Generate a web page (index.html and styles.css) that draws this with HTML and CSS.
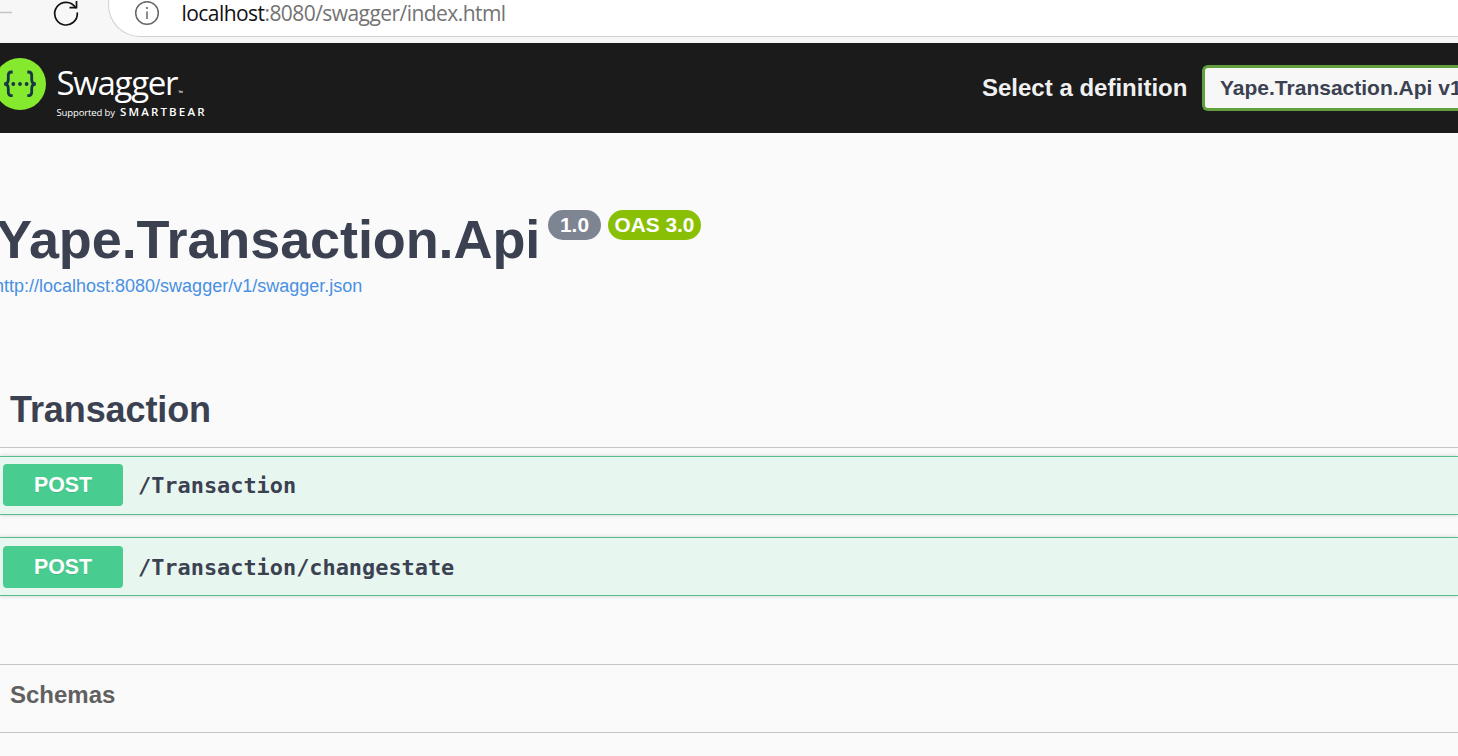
FILE: index.html
```html
<!DOCTYPE html>
<html lang="en">
<head>
<meta charset="utf-8">
<title>Swagger UI</title>
<link rel="stylesheet" href="styles.css">
</head>
<body>
<div class="browser-bar">
  <svg class="browser-icons" width="108" height="43" viewBox="0 0 108 43" fill="none">
    <path d="M0 12.5H12" stroke="#c4c4c4" stroke-width="1.5"/>
    <path d="M75.500 7.500A11.300 11.300 0 1 0 77.300 13" stroke="#111" stroke-width="1.700" stroke-linecap="round"/>
    <path d="M76.500 1V7.700H69.500" stroke="#111" stroke-width="1.700"/>
  </svg>
  <div class="address">
    <svg class="info-icon" width="26" height="26" viewBox="0 0 26 26" fill="none">
      <circle cx="13" cy="13" r="11.3" stroke="#666" stroke-width="1.5"/>
      <path d="M13 11.5V19" stroke="#666" stroke-width="1.5"/>
      <circle cx="13" cy="8" r="1.1" fill="#666"/>
    </svg>
    <span class="url"><span class="host">localhost</span>:8080/swagger/index.html</span>
  </div>
</div>
<header class="topbar">
  <svg class="logo" width="210" height="90" viewBox="0 0 210 90">
    <circle cx="20" cy="41" r="26" fill="#85ea2d"/>
    <g fill="none" stroke="#173647" stroke-width="2.8">
      <path d="M12.7 29H11.5Q8.3 29 8.3 32.5V36.5Q8.3 40.8 4.2 41Q8.3 41.2 8.3 45.500V49Q8.300 52.700 11.500 52.700H12.700"/>
      <path d="M27.300 29H28.500Q31.700 29 31.700 32.500V36.500Q31.700 40.800 35.800 41Q31.700 41.200 31.700 45.500V49Q31.700 52.700 28.500 52.700H27.300"/>
    </g>
    <g fill="#173647"><circle cx="13.300" cy="41" r="1.900"/><circle cx="20" cy="41" r="1.900"/><circle cx="26.600" cy="41" r="1.900"/></g>
    <text class="brand" x="56.500" y="51.800" textLength="122">Swagger</text>
    <text class="mark" x="178.500" y="52">™</text>
    <text class="support" x="56.500" y="72.500" textLength="58.500">Supported by</text>
    <text class="smartbear" x="120" y="72.500" textLength="84.500">SMARTBEAR</text>
  </svg>
  <div class="definition">
    <span class="definition-label">Select a definition</span>
    <div class="select">Yape.Transaction.Api v1</div>
  </div>
</header>
<main>
  <section class="info">
    <h1 class="title"><span class="title-name">Yape.Transaction.Api</span><span class="badge version">1.0</span><span class="badge oas">OAS 3.0</span></h1>
    <a class="spec-link">http://localhost:8080/swagger/v1/swagger.json</a>
  </section>
  <h2 class="tag">Transaction</h2>
  <div class="operations">
    <div class="operation"><span class="method">POST</span><span class="path">/Transaction</span></div>
    <div class="operation"><span class="method">POST</span><span class="path">/Transaction/changestate</span></div>
  </div>
  <section class="schemas">Schemas</section>
</main>
</body>
</html>
```

FILE: styles.css
```css
* { box-sizing: border-box; }
body {
  margin: 0;
  height: 756px;
  overflow: hidden;
  background: #fafafa;
  color: #3b4151;
  font-family: "Liberation Sans", Arial, sans-serif;
  white-space: nowrap;
}
.browser-bar { display: flex; height: 43px; background: #f7f7f7; }
.browser-icons { flex: none; }
.address {
  flex: 1;
  display: flex;
  height: 64px;
  margin-top: -27px;
  padding: 27px 0 0 25px;
  background: #fff;
  border: 1.5px solid #d0d0d0;
  border-right: 0;
  border-radius: 32px 0 0 32px;
}
.info-icon { flex: none; margin-top: -1px; }
.url {
  margin: -1px 0 0 21.500px;
  font: 21px/27px "Open Sans", "Noto Sans", sans-serif;
  letter-spacing: -.56px;
  color: #737373;
}
.host { color: #111; }
.topbar { display: flex; justify-content: space-between; height: 90px; background: #1b1b1b; }
.logo { flex: none; }
.logo text { fill: #fff; font-family: "Open Sans", sans-serif; }
.logo .brand { font-size: 33px; }
.logo .mark { font-size: 6px; }
.logo .support { font-size: 9.5px; }
.logo .smartbear { font-size: 11.5px; font-weight: 600; }
.definition { display: flex; align-items: center; width: 476px; font-weight: 700; }
.definition-label { width: 221px; color: #f0f0f0; font-size: 24px; }
.select {
  flex: 1;
  height: 46px;
  margin-left: -1px;
  padding-left: 15px;
  overflow: hidden;
  border: 3px solid #62a03f;
  border-right: 0;
  border-radius: 6px 0 0 6px;
  background: #f7f7f7;
  font-size: 21px;
  line-height: 40px;
}
.info { height: 235px; padding-top: 75px; }
.title { display: flex; margin: 0 0 0 -4px; height: 64px; font-size: 54px; line-height: 63px; }
.title-name { width: 552px; letter-spacing: -.1px; }
.badge { height: 30px; margin-top: 2px; border-radius: 15px; color: #fff; font-size: 20.8px; line-height: 30px; text-align: center; }
.version { width: 53px; background: #7d8492; }
.oas { width: 93px; margin-left: 7px; background: #89bf04; }
.spec-link { display: block; margin-left: -6px; color: #4990e2; font-size: 18px; line-height: 28px; }
.tag { height: 80px; margin: 0; padding: 21px 0 0 10px; border-bottom: 1px solid #c4c5c7; font-size: 36px; line-height: 42px; letter-spacing: -.1px; }
.operations { display: flex; flex-direction: column; gap: 22px; padding-top: 8px; }
.operation {
  display: flex;
  align-items: center;
  height: 59px;
  padding-left: 3px;
  border: solid #57bd8f;
  border-width: 1px 0;
  background: #e7f6ef;
  box-shadow: 0 0 4px rgba(0, 0, 0, .19);
}
.method {
  width: 120px;
  height: 42px;
  margin-top: -1px;
  border-radius: 4px;
  background: #49cc90;
  color: #fff;
  font-size: 21.300px;
  font-weight: 700;
  line-height: 42px;
  text-align: center;
  text-shadow: 0 1px 0 rgba(0, 0, 0, .1);
}
.path { margin-left: 15px; font: 700 21.9px/30px "DejaVu Sans Mono", monospace; }
.operation:last-child .method { margin-top: 1px; }
.operation:last-child .path { margin-top: 2px; }
.schemas {
  height: 69px;
  margin-top: 68px;
  padding: 15px 0 0 10px;
  border: solid #c4c5c7;
  border-width: 1px 0;
  color: #606060;
  font-size: 24px;
  font-weight: 700;
  line-height: 30px;
}
```
